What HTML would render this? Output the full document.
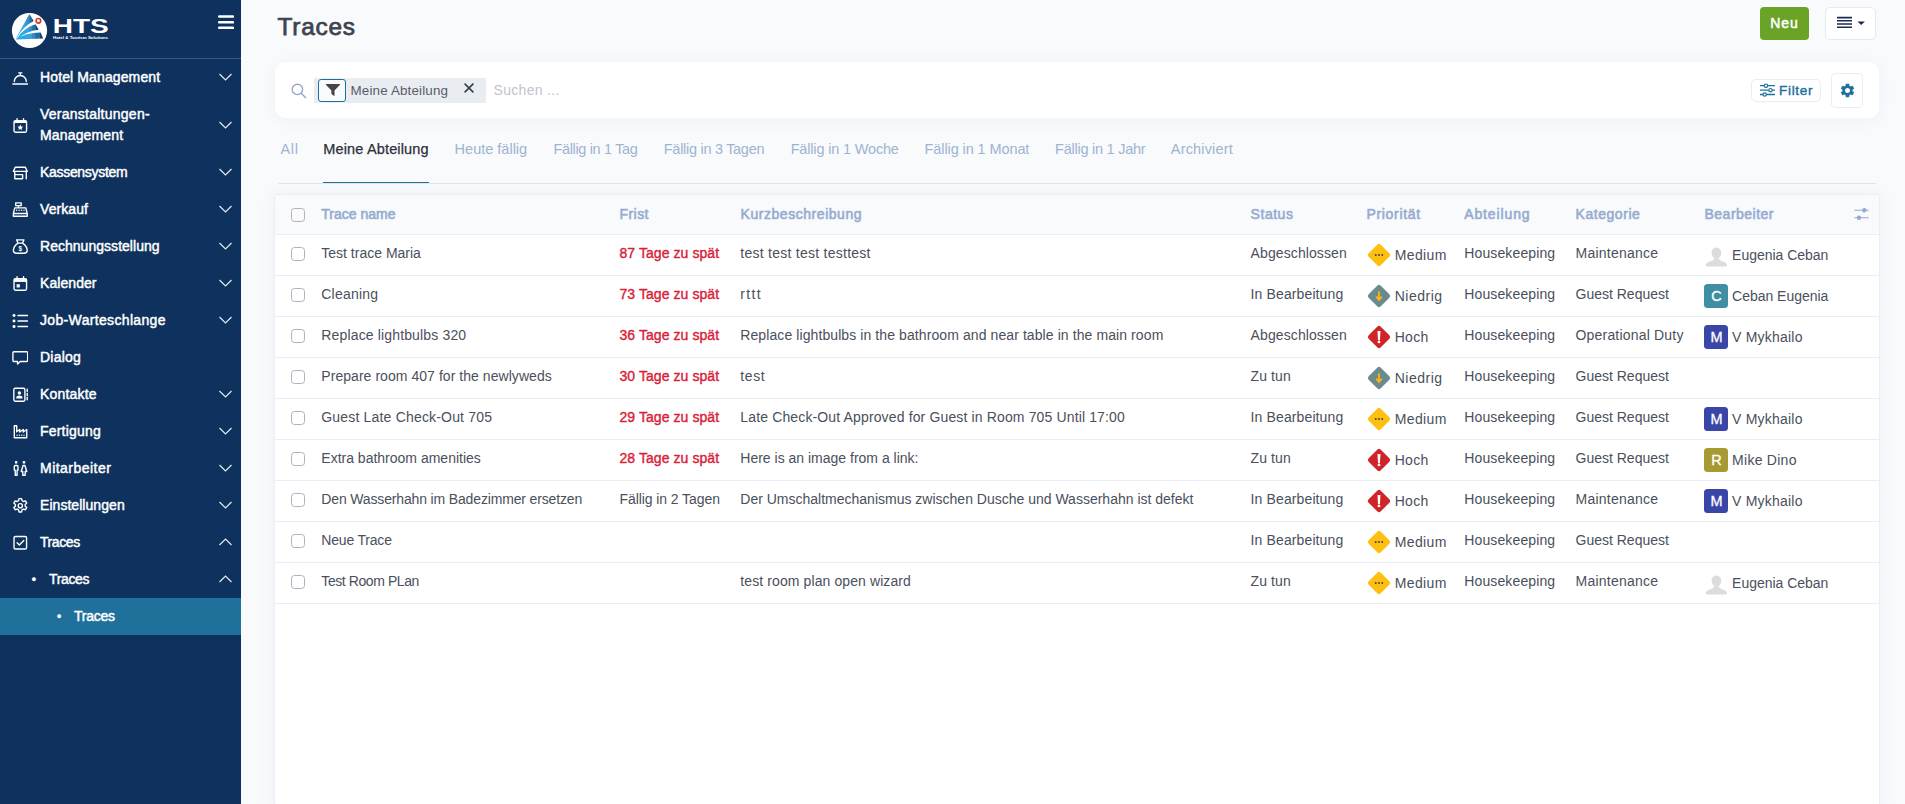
<!DOCTYPE html>
<html><head><meta charset="utf-8">
<style>
*{box-sizing:border-box;margin:0;padding:0}
html,body{width:1905px;height:804px;overflow:hidden;background:#f8fafc;font-family:"Liberation Sans",sans-serif;}
body{position:relative;color:#454b57}
#sb{position:absolute;left:0;top:0;width:241px;height:804px;background:#0e325d;}
.mi .dot{position:absolute;top:1.3px;line-height:37px;font-size:12px}
.pi{position:absolute;left:1090.9px;top:7px;width:26px;height:26px}
.av{position:absolute;left:1429px;top:8px;width:24px;height:24px;border-radius:3.5px;color:#fff;font-size:14.5px;line-height:24px;text-align:center;padding-left:1px;-webkit-text-stroke:0.3px #fff}
#sb .sep{position:absolute;left:0;top:58px;width:241px;height:1px;background:#3a5a82}
.mi{position:absolute;left:0;width:241px;height:37px;color:#fff;font-size:14px;-webkit-text-stroke:0.45px #fff}
.mi .t{position:absolute;left:40px;top:0;line-height:37px;white-space:nowrap}
.mi svg.ic{position:absolute;left:11.8px;top:9.5px;width:16.6px;height:16.6px;}
.mi svg.ch{position:absolute;left:218px;top:13px;width:15px;height:10px}
.mi.act{background:#20709c}
#title{position:absolute;left:277.6px;top:10.5px;font-size:24.4px;line-height:32px;color:#3d424d;-webkit-text-stroke:0.75px #3d424d}
#neu{position:absolute;left:1760px;top:7px;width:49px;height:33px;background:#6aa325;border-radius:4px;color:#fff;font-size:14px;line-height:32px;-webkit-text-stroke:0.5px #fff}
#neu span{position:absolute;left:10.2px;top:0}
#lst{position:absolute;left:1825px;top:7px;width:51px;height:33px;background:#fff;border:1px solid #e4e9f2;border-radius:5px}
#search{position:absolute;left:275px;top:62px;width:1604px;height:56px;background:#fff;border-radius:10px;box-shadow:0 2px 14px rgba(120,135,180,.08)}
#chip{position:absolute;left:39px;top:16px;width:172px;height:25px;background:#e9ecf0;}
#chip .fb{position:absolute;left:4px;top:1px;width:28px;height:23px;border:1px solid #20709c;border-radius:3px;background:#f8fafc}
#chip .tx{position:absolute;left:36.5px;top:0;line-height:25px;font-size:13.4px;color:#585d69}
#such{position:absolute;left:218.5px;top:16px;line-height:25px;font-size:14px;color:#bfc3cc}
#fbtn{position:absolute;left:1476px;top:17px;width:70px;height:23px;border:1px solid #e8edf6;border-radius:5px;background:#fff;color:#20709c;font-size:13.5px;line-height:21px;-webkit-text-stroke:0.4px #20709c}
#gear{position:absolute;left:1556px;top:11px;width:32px;height:35px;border:1px solid #e8edf6;border-radius:4px;background:#fff}
#tabs{position:absolute;left:278px;top:118px;width:1598px;height:66px;border-bottom:1px solid #e1e5ef}
#tabs span{position:absolute;top:21px;line-height:20px;font-size:14.5px;color:#9fb3d1;white-space:nowrap}
#tabs span.a{color:#2a2f3a;-webkit-text-stroke:0.25px #2a2f3a}
#tabs .ul{position:absolute;left:45px;top:64px;width:106px;height:1px;background:#20709c}
#tbl{position:absolute;left:274px;top:194px;width:1606px;height:620px;background:#fff;border:1px solid #e9eef7;border-radius:3px;box-shadow:0 0 16px rgba(120,135,180,.09)}
.hd{position:absolute;left:0;top:0;width:1604px;height:40px;background:#f8fafc;border-bottom:1px solid #e9edf5}
.hd span{position:absolute;top:0;line-height:39px;font-size:14px;color:#96acd0;-webkit-text-stroke:0.6px #96acd0;white-space:nowrap}
.r{position:absolute;left:0;width:1604px;height:41px;border-bottom:1px solid #e9edf5}
.r span{position:absolute;top:0;line-height:36px;font-size:14px;color:#4a505c;white-space:nowrap}
.cb{position:absolute;left:16px;width:14px;height:14px;border:1px solid #b7adbf;border-radius:3.5px;background:#fff}
.hd .cb{background:transparent}
</style></head><body>
<div id="sb"><div class="sep"></div><svg id="logo" style="position:absolute;left:10px;top:11px" width="102" height="40" viewBox="0 0 102 40">
<defs>
<linearGradient id="g1" gradientUnits="userSpaceOnUse" x1="0" x2="40" y1="0" y2="0"><stop offset=".4" stop-color="#2ea6e2"/><stop offset=".42" stop-color="#3b86cc"/><stop offset=".485" stop-color="#3b86cc"/><stop offset=".495" stop-color="#1f709c"/><stop offset=".545" stop-color="#1f709c"/><stop offset=".555" stop-color="#1d3d74"/></linearGradient>
<linearGradient id="g2" gradientUnits="userSpaceOnUse" x1="0" x2="40" y1="0" y2="0"><stop offset=".475" stop-color="#2ea6e2"/><stop offset=".49" stop-color="#3b86cc"/><stop offset=".555" stop-color="#3b86cc"/><stop offset=".565" stop-color="#1f709c"/><stop offset=".645" stop-color="#1f709c"/><stop offset=".655" stop-color="#1d3d74"/></linearGradient>
<linearGradient id="g3" gradientUnits="userSpaceOnUse" x1="0" x2="40" y1="0" y2="0"><stop offset=".545" stop-color="#2ea6e2"/><stop offset=".555" stop-color="#3b86cc"/><stop offset=".63" stop-color="#3b86cc"/><stop offset=".64" stop-color="#1f709c"/><stop offset=".745" stop-color="#1f709c"/><stop offset=".755" stop-color="#1d3d74"/></linearGradient>
</defs>
<circle cx="19.5" cy="19.5" r="17.6" fill="#fff"/>
<path d="M6.2 26.9 L19.1 3.6 Q19.6 3.2 20 3.8 L23.6 10 Q13 15.5 7 26.6 Z" fill="url(#g1)"/>
<path d="M7.2 27.2 Q14 16.5 25.6 13.3 L28.7 18.7 Q16 20 7.8 27.8 Z" fill="url(#g2)"/>
<path d="M5.8 28 Q17 21.3 30.6 21.5 L33.2 27.6 L6.2 28.6 Z" fill="url(#g3)"/>
<circle cx="28.4" cy="9.8" r="2.3" fill="#fff" stroke="#d8372a" stroke-width="1.7"/>
<text x="42.7" y="22.2" font-family="Liberation Sans" font-weight="bold" font-size="19.8" fill="#fff" textLength="56" lengthAdjust="spacingAndGlyphs">HTS</text>
<text x="43" y="28.4" font-family="Liberation Sans" font-weight="bold" font-size="4.3" fill="#fff" textLength="55" lengthAdjust="spacingAndGlyphs">Hotel &amp; Tourism Solutions</text>
</svg><svg style="position:absolute;left:218px;top:14px" width="16" height="16" viewBox="0 0 16 16"><path d="M1.2 2.6 h13.8 M1.2 8.3 h13.8 M1.2 13.8 h13.8" stroke="#fff" stroke-width="2.5" stroke-linecap="round"/></svg><div class="mi" style="top:59px"><svg class="ic" style="" viewBox="0 0 18 18"><path d="M2.5 13.5 a6.5 6.5 0 0 1 13 0 M1 16.2 h16 M9 7 v-2.3 M7.3 4.2 h3.4" fill="none" stroke="#fff" stroke-width="1.5" stroke-linejoin="round" stroke-linecap="round"/></svg><span class="t" style="letter-spacing:0.12px">Hotel Management</span><svg class="ch" viewBox="0 0 15 10"><path d="M1.5 2 L7.5 8 L13.5 2" fill="none" stroke="#e4e9f1" stroke-width="1.2"/></svg></div><div class="mi" style="top:96px;height:58px"><svg class="ic" style="top:21px" viewBox="0 0 18 18"><rect x="2.2" y="4" width="13.6" height="12.5" rx="1.5" fill="none" stroke="#fff" stroke-width="1.5" stroke-linejoin="round" stroke-linecap="round"/><path d="M2.2 4.3 h13.6 v2.2 h-13.6z" fill="#fff"/><path d="M5.5 1.8 v3 M12.5 1.8 v3" fill="none" stroke="#fff" stroke-width="1.5" stroke-linejoin="round" stroke-linecap="round"/><path d="M9 8.2 l1 2.1 2.2.2 -1.7 1.5 .5 2.2 -2 -1.2 -2 1.2 .5 -2.2 -1.7 -1.5 2.2 -.2z" fill="#fff"/></svg><span class="t" style="line-height:21px;top:8px;letter-spacing:0.25px">Veranstaltungen-</span><span class="t" style="line-height:21px;top:29px;letter-spacing:0.16px">Management</span><svg style="top:24px" class="ch" viewBox="0 0 15 10"><path d="M1.5 2 L7.5 8 L13.5 2" fill="none" stroke="#e4e9f1" stroke-width="1.2"/></svg></div><div class="mi" style="top:154px"><svg class="ic" style="" viewBox="0 0 18 18"><path d="M1.5 8 l2 -4.5 h11 l2 4.5 z M3 8 v8 M15.5 8 v8 M3 11.5 h8.5 v4.5 h-8.5" fill="none" stroke="#fff" stroke-width="1.5" stroke-linejoin="round" stroke-linecap="round"/></svg><span class="t" style="letter-spacing:-0.31px">Kassensystem</span><svg class="ch" viewBox="0 0 15 10"><path d="M1.5 2 L7.5 8 L13.5 2" fill="none" stroke="#e4e9f1" stroke-width="1.2"/></svg></div><div class="mi" style="top:191px"><svg class="ic" style="" viewBox="0 0 18 18"><rect x="4" y="2" width="6" height="3" fill="none" stroke="#fff" stroke-width="1.5" stroke-linejoin="round" stroke-linecap="round"/><path d="M7 5 v2.5 M3 7.5 h12 l1.5 6 h-15z M1.5 13.5 v3 h15 v-3 M5 10 h.1 M7.7 10 h.1 M10.3 10 h.1 M13 10 h.1" fill="none" stroke="#fff" stroke-width="1.5" stroke-linejoin="round" stroke-linecap="round"/></svg><span class="t" style="letter-spacing:0.08px">Verkauf</span><svg class="ch" viewBox="0 0 15 10"><path d="M1.5 2 L7.5 8 L13.5 2" fill="none" stroke="#e4e9f1" stroke-width="1.2"/></svg></div><div class="mi" style="top:228px"><svg class="ic" style="" viewBox="0 0 18 18"><path d="M6.5 5.5 l-1.5 -3.5 h8 l-1.5 3.5 c3 2 5 5 5 8 c0 2 -1.5 3 -3.5 3 h-8 c-2 0 -3.5 -1 -3.5 -3 c0 -3 2 -6 5 -8z M6.5 5.5 h5" fill="none" stroke="#fff" stroke-width="1.5" stroke-linejoin="round" stroke-linecap="round"/><text x="9" y="14" font-size="7" font-weight="bold" fill="#fff" text-anchor="middle" font-family="Liberation Sans">$</text></svg><span class="t" style="letter-spacing:0.03px">Rechnungsstellung</span><svg class="ch" viewBox="0 0 15 10"><path d="M1.5 2 L7.5 8 L13.5 2" fill="none" stroke="#e4e9f1" stroke-width="1.2"/></svg></div><div class="mi" style="top:265px"><svg class="ic" style="" viewBox="0 0 18 18"><rect x="2.2" y="4" width="13.6" height="12.5" rx="1.5" fill="none" stroke="#fff" stroke-width="1.5" stroke-linejoin="round" stroke-linecap="round"/><path d="M2.2 4.5 h13.6 v3 h-13.6z" fill="#fff"/><path d="M5.5 1.8 v3 M12.5 1.8 v3" fill="none" stroke="#fff" stroke-width="1.5" stroke-linejoin="round" stroke-linecap="round"/><rect x="5" y="10" width="3.5" height="3.5" fill="#fff"/></svg><span class="t" style="letter-spacing:0.07px">Kalender</span><svg class="ch" viewBox="0 0 15 10"><path d="M1.5 2 L7.5 8 L13.5 2" fill="none" stroke="#e4e9f1" stroke-width="1.2"/></svg></div><div class="mi" style="top:302px"><svg class="ic" style="" viewBox="0 0 18 18"><path d="M6.5 3.8 h10.5 M6.5 9.8 h10.5 M6.5 15.8 h10.5" fill="none" stroke="#fff" stroke-width="1.5" stroke-linejoin="round" stroke-linecap="round" stroke-width="1.7"/><circle cx="2.2" cy="3.8" r="1.6" fill="#fff"/><circle cx="2.2" cy="9.8" r="1.6" fill="#fff"/><circle cx="2.2" cy="15.8" r="1.6" fill="#fff"/></svg><span class="t" style="letter-spacing:0.34px">Job-Warteschlange</span><svg class="ch" viewBox="0 0 15 10"><path d="M1.5 2 L7.5 8 L13.5 2" fill="none" stroke="#e4e9f1" stroke-width="1.2"/></svg></div><div class="mi" style="top:339px"><svg class="ic" style="" viewBox="0 0 18 18"><path d="M2 3 h14 a1 1 0 0 1 1 1 v8.5 a1 1 0 0 1 -1 1 h-7 l-3 2.8 v-2.8 h-4 a1 1 0 0 1 -1 -1 v-8.5 a1 1 0 0 1 1 -1z" fill="none" stroke="#fff" stroke-width="1.5" stroke-linejoin="round" stroke-linecap="round"/></svg><span class="t" style="letter-spacing:0.21px">Dialog</span></div><div class="mi" style="top:376px"><svg class="ic" style="" viewBox="0 0 18 18"><rect x="2" y="2.5" width="12" height="14" rx="1.5" fill="none" stroke="#fff" stroke-width="1.5" stroke-linejoin="round" stroke-linecap="round"/><circle cx="8" cy="7.5" r="1.9" fill="#fff"/><path d="M4.5 13.5 c0 -2.5 1.5 -3.2 3.5 -3.2 s3.5 .7 3.5 3.200z" fill="#fff"/><path d="M16.5 3.5 v2.5 M16.5 8 v2.5 M16.5 12.5 v2.5" fill="none" stroke="#fff" stroke-width="1.5" stroke-linejoin="round" stroke-linecap="round"/></svg><span class="t" style="letter-spacing:0.18px">Kontakte</span><svg class="ch" viewBox="0 0 15 10"><path d="M1.5 2 L7.5 8 L13.5 2" fill="none" stroke="#e4e9f1" stroke-width="1.2"/></svg></div><div class="mi" style="top:413px"><svg class="ic" style="" viewBox="0 0 18 18"><path d="M2.5 3 v13 h13.5 v-9 l-3.8 2.8 v-2.8 l-3.8 2.8 v-2.8 l-3.3 2.5 v-6.500z M5.5 13.2 h.1 M8 13.2 h.1 M10.5 13.2 h.1 M13 13.2 h.1" fill="none" stroke="#fff" stroke-width="1.5" stroke-linejoin="round" stroke-linecap="round"/></svg><span class="t" style="letter-spacing:0.20px">Fertigung</span><svg class="ch" viewBox="0 0 15 10"><path d="M1.5 2 L7.5 8 L13.5 2" fill="none" stroke="#e4e9f1" stroke-width="1.2"/></svg></div><div class="mi" style="top:450px"><svg class="ic" style="" viewBox="0 0 18 18"><rect x="3.2" y="1.2" width="2.6" height="2.6" fill="#fff"/><rect x="11.7" y="1.2" width="2.6" height="2.6" fill="#fff"/><path d="M2.5 11 v-4 a1 1 0 0 1 1 -1 h2 a1 1 0 0 1 1 1 v4 h-1 v5.5 h-2 v-5.500z M12 6 h2 l2 6.5 h-1.7 v4 h-2.6 v-4 h-1.700z" fill="none" stroke="#fff" stroke-width="1.5" stroke-linejoin="round" stroke-linecap="round" stroke-width="1.3"/></svg><span class="t" style="letter-spacing:0.47px">Mitarbeiter</span><svg class="ch" viewBox="0 0 15 10"><path d="M1.5 2 L7.5 8 L13.5 2" fill="none" stroke="#e4e9f1" stroke-width="1.2"/></svg></div><div class="mi" style="top:487px"><svg class="ic" style="" viewBox="0 0 18 18"><circle cx="9" cy="9.5" r="2.3" fill="none" stroke="#fff" stroke-width="1.5" stroke-linejoin="round" stroke-linecap="round"/><path d="M7.6 1.8 h2.8 l.5 2.2 1.5 .9 2.2 -.7 1.4 2.4 -1.7 1.5 v1.8 l1.7 1.5 -1.4 2.4 -2.2 -.7 -1.5 .9 -.5 2.2 h-2.8 l-.5 -2.2 -1.5 -.9 -2.2 .7 -1.4 -2.4 1.7 -1.5 v-1.8 l-1.7 -1.5 1.4 -2.4 2.2 .7 1.5 -.9z" fill="none" stroke="#fff" stroke-width="1.5" stroke-linejoin="round" stroke-linecap="round"/></svg><span class="t" style="letter-spacing:0.05px">Einstellungen</span><svg class="ch" viewBox="0 0 15 10"><path d="M1.5 2 L7.5 8 L13.5 2" fill="none" stroke="#e4e9f1" stroke-width="1.2"/></svg></div><div class="mi" style="top:524px"><svg class="ic" style="" viewBox="0 0 18 18"><rect x="2.2" y="2.7" width="13.6" height="13.6" rx="1.5" fill="none" stroke="#fff" stroke-width="1.5" stroke-linejoin="round" stroke-linecap="round"/><path d="M5.5 9.5 l2.5 2.5 4.8 -5" fill="none" stroke="#fff" stroke-width="1.5" stroke-linejoin="round" stroke-linecap="round"/></svg><span class="t" style="letter-spacing:-0.42px">Traces</span><svg class="ch" viewBox="0 0 15 10"><path d="M1.5 8 L7.5 2 L13.5 8" fill="none" stroke="#e4e9f1" stroke-width="1.2"/></svg></div><div class="mi" style="top:561px"><span class="dot" style="left:31.7px">•</span><span class="t" style="left:49px;letter-spacing:-0.36px">Traces</span><svg class="ch" viewBox="0 0 15 10"><path d="M1.5 8 L7.5 2 L13.5 8" fill="none" stroke="#e4e9f1" stroke-width="1.2"/></svg></div><div class="mi act" style="top:598px"><span class="dot" style="left:56.900px">•</span><span class="t" style="left:74px;letter-spacing:-0.24px">Traces</span></div></div>
<div id="title" style="letter-spacing:0.75px">Traces</div><div id="neu"><span style="letter-spacing:0.99px">Neu</span></div><div id="lst"><svg style="position:absolute;left:11.4px;top:8.2px" width="30" height="14" viewBox="0 0 30 14"><path d="M0 1.6 h15 M0 4.8 h15 M0 8 h15 M0 11.2 h15" stroke="#1b2a52" stroke-width="1.6"/><path d="M20.5 5.4 h7.4 l-3.7 3.700z" fill="#1b2a52"/></svg></div>
<div id="search"><svg style="position:absolute;left:16px;top:21px" width="16" height="16" viewBox="0 0 16 16"><circle cx="6.4" cy="6.4" r="5.2" fill="none" stroke="#98a8c8" stroke-width="1.4"/><path d="M10.2 10.2 L15 15" stroke="#98a8c8" stroke-width="1.5"/></svg><div id="chip"><div class="fb"><svg style="position:absolute;left:5.500px;top:4.200px" width="15" height="12.5" viewBox="0 0 15 12.5"><path d="M0.3 0 h14.4 q.5.3 .1.9 l-5.3 5.6 v5 q0 .8 -.7.3 l-2.4 -1.9 v-3.4 l-5.3 -5.6 q-.4-.6 .100-.9z" fill="#4a4048"/></svg></div><div class="tx" style="letter-spacing:0.16px">Meine Abteilung</div><svg style="position:absolute;left:150px;top:4.500px" width="10" height="10" viewBox="0 0 10 10"><path d="M0.6 0.6 L9.4 9.4 M9.4 0.6 L0.6 9.4" stroke="#3a3f4a" stroke-width="1.6"/></svg></div><div id="such" style="letter-spacing:0.32px">Suchen ...</div><div id="fbtn"><svg style="position:absolute;left:7.500px;top:3px" width="15" height="15" viewBox="0 0 15 15"><path d="M0 2.7 h15 M0 7.2 h15 M0 11.5 h15" stroke="#20709c" stroke-width="1.3"/><circle cx="6" cy="2.7" r="1.7" fill="#fff" stroke="#20709c" stroke-width="1.2"/><circle cx="10.5" cy="7.2" r="1.7" fill="#fff" stroke="#20709c" stroke-width="1.2"/><circle cx="4.7" cy="11.5" r="1.7" fill="#fff" stroke="#20709c" stroke-width="1.2"/></svg><span style="position:absolute;left:27px;top:0;letter-spacing:0.70px">Filter</span></div><div id="gear"><svg style="position:absolute;left:6.500px;top:8px" width="17" height="17" viewBox="0 0 24 24"><path d="M19.14 12.94c.04-.3.06-.61.06-.94 0-.32-.02-.64-.07-.94l2.030-1.580c.18-.14.23-.41.12-.61l-1.920-3.320c-.12-.22-.37-.29-.59-.22l-2.390.96c-.5-.38-1.030-.7-1.620-.94l-.36-2.540c-.04-.24-.24-.41-.48-.41h-3.840c-.24 0-.43.17-.47.41l-.36 2.540c-.59.24-1.130.57-1.620.94l-2.390-.96c-.22-.08-.47 0-.59.22L2.740 8.870c-.12.21-.08.47.12.61l2.030 1.580c-.05.3-.09.63-.09.94s.02.64.07.94l-2.030 1.580c-.18.14-.23.41-.12.61l1.920 3.320c.12.22.37.29.59.22l2.390-.96c.5.38 1.030.7 1.620.94l.36 2.540c.05.24.24.41.48.41h3.840c.24 0 .44-.17.47-.41l.36-2.540c.59-.24 1.130-.56 1.620-.94l2.390.96c.22.08.47 0 .59-.22l1.920-3.320c.12-.22.07-.47-.12-.61l-2.010-1.580zM12 15.600c-1.980 0-3.6-1.620-3.6-3.600s1.620-3.6 3.6-3.6 3.6 1.620 3.6 3.6-1.620 3.6-3.6 3.600z" fill="#20709c"/></svg></div></div>
<div id="tabs"><span class="" style="left:2.4px;letter-spacing:0.69px">All</span><span class="a" style="left:45.3px;letter-spacing:0.15px">Meine Abteilung</span><span class="" style="left:176.6px;letter-spacing:-0.00px">Heute fällig</span><span class="" style="left:275.4px;letter-spacing:-0.34px">Fällig in 1 Tag</span><span class="" style="left:385.8px;letter-spacing:-0.29px">Fällig in 3 Tagen</span><span class="" style="left:512.7px;letter-spacing:-0.17px">Fällig in 1 Woche</span><span class="" style="left:646.6px;letter-spacing:-0.10px">Fällig in 1 Monat</span><span class="" style="left:777.1px;letter-spacing:-0.25px">Fällig in 1 Jahr</span><span class="" style="left:892.8px;letter-spacing:0.17px">Archiviert</span><div class="ul"></div></div>
<div id="tbl"><div class="hd"><div class="cb" style="top:13px"></div><span style="left:46.3px;letter-spacing:0.01px">Trace name</span><span style="left:344.5px;letter-spacing:0.44px">Frist</span><span style="left:465.6px;letter-spacing:0.54px">Kurzbeschreibung</span><span style="left:975.6px;letter-spacing:0.53px">Status</span><span style="left:1091.4px;letter-spacing:0.69px">Priorität</span><span style="left:1189.2px;letter-spacing:0.88px">Abteilung</span><span style="left:1300.5px;letter-spacing:0.55px">Kategorie</span><span style="left:1429.5px;letter-spacing:0.49px">Bearbeiter</span><svg style="position:absolute;left:1579px;top:11px" width="16" height="16" viewBox="0 0 16 16"><path d="M0.3 4.2 h14.5 M0.3 11.7 h14.5" stroke="#96acd0" stroke-width="1.1"/><circle cx="10.3" cy="4.2" r="2.2" fill="#96acd0"/><circle cx="5" cy="11.7" r="2.2" fill="#96acd0"/></svg></div><div class="r" style="top:40px"><div class="cb" style="top:12px"></div><span style="left:46.3px;letter-spacing:-0.00px">Test trace Maria</span><span style="left:344.5px;letter-spacing:0.07px;color:#d81e3a;-webkit-text-stroke:0.4px #d81e3a">87 Tage zu spät</span><span style="left:465.3px;letter-spacing:0.26px">test test test testtest</span><span style="left:975.6px;letter-spacing:0.10px">Abgeschlossen</span><svg class="pi" viewBox="0 0 24 24"><rect x="4.1" y="4.1" width="15.8" height="15.8" rx="2.3" transform="rotate(45 12 12)" fill="#fdc010"/><circle cx="9" cy="12" r=".95" fill="#4a4048"/><circle cx="12" cy="12" r=".95" fill="#4a4048"/><circle cx="15" cy="12" r=".95" fill="#4a4048"/></svg><span style="left:1119.7px;letter-spacing:0.37px;top:2px">Medium</span><span style="left:1189.3px;letter-spacing:0.12px">Housekeeping</span><span style="left:1300.5px;letter-spacing:0.23px">Maintenance</span><svg class="av" viewBox="0 0 24 24"><ellipse cx="11.9" cy="10" rx="5.1" ry="5.9" fill="#dadcde"/><path d="M0.8 22.5 c0 -2 2 -3 5 -4 c2.5 -.8 3.4 -1.5 3.4 -3.2 h5.4 c0 1.7 1 2.4 3.4 3.2 c3 1 5 2 5 4 q0 1.5 -1.5 1.5 h-19.2 q-1.5 0 -1.5 -1.500z" fill="#dadcde"/></svg><span style="left:1457.1px;letter-spacing:-0.02px;top:2px">Eugenia Ceban</span></div><div class="r" style="top:81px"><div class="cb" style="top:12px"></div><span style="left:46.3px;letter-spacing:0.21px">Cleaning</span><span style="left:344.5px;letter-spacing:0.07px;color:#d81e3a;-webkit-text-stroke:0.4px #d81e3a">73 Tage zu spät</span><span style="left:465.3px;letter-spacing:1.37px">rttt</span><span style="left:975.6px;letter-spacing:0.12px">In Bearbeitung</span><svg class="pi" viewBox="0 0 24 24"><rect x="4.1" y="4.1" width="15.8" height="15.8" rx="2.3" transform="rotate(45 12 12)" fill="#6b8a8e"/><path d="M12 7.6 v7.6 M9.4 12.6 l2.6 2.9 2.6 -2.9" stroke="#fdb515" stroke-width="1.7" fill="none"/></svg><span style="left:1119.7px;letter-spacing:0.50px;top:2px">Niedrig</span><span style="left:1189.3px;letter-spacing:0.12px">Housekeeping</span><span style="left:1300.5px;letter-spacing:-0.00px">Guest Request</span><div class="av" style="background:#3f8ea3">C</div><span style="left:1457.1px;letter-spacing:-0.02px;top:2px">Ceban Eugenia</span></div><div class="r" style="top:122px"><div class="cb" style="top:12px"></div><span style="left:46.3px;letter-spacing:0.15px">Replace lightbulbs 320</span><span style="left:344.5px;letter-spacing:0.07px;color:#d81e3a;-webkit-text-stroke:0.4px #d81e3a">36 Tage zu spät</span><span style="left:465.3px;letter-spacing:0.09px">Replace lightbulbs in the bathroom and near table in the main room</span><span style="left:975.6px;letter-spacing:0.10px">Abgeschlossen</span><svg class="pi" viewBox="0 0 24 24"><rect x="4.1" y="4.1" width="15.8" height="15.8" rx="2.3" transform="rotate(45 12 12)" fill="#cf2529"/><path d="M10.6 6.4 h2.8 l-.5 8.4 h-1.800z" fill="#fff"/><circle cx="12" cy="16.5" r="1.3" fill="#fff"/></svg><span style="left:1119.7px;letter-spacing:0.29px;top:2px">Hoch</span><span style="left:1189.3px;letter-spacing:0.12px">Housekeeping</span><span style="left:1300.5px;letter-spacing:0.19px">Operational Duty</span><div class="av" style="background:#3a45a8">M</div><span style="left:1457.1px;letter-spacing:0.21px;top:2px">V Mykhailo</span></div><div class="r" style="top:163px"><div class="cb" style="top:12px"></div><span style="left:46.3px;letter-spacing:0.05px">Prepare room 407 for the newlyweds</span><span style="left:344.5px;letter-spacing:0.07px;color:#d81e3a;-webkit-text-stroke:0.4px #d81e3a">30 Tage zu spät</span><span style="left:465.3px;letter-spacing:0.59px">test</span><span style="left:975.6px;letter-spacing:0.09px">Zu tun</span><svg class="pi" viewBox="0 0 24 24"><rect x="4.1" y="4.1" width="15.8" height="15.8" rx="2.3" transform="rotate(45 12 12)" fill="#6b8a8e"/><path d="M12 7.6 v7.6 M9.4 12.6 l2.6 2.9 2.6 -2.9" stroke="#fdb515" stroke-width="1.7" fill="none"/></svg><span style="left:1119.7px;letter-spacing:0.50px;top:2px">Niedrig</span><span style="left:1189.3px;letter-spacing:0.12px">Housekeeping</span><span style="left:1300.5px;letter-spacing:-0.00px">Guest Request</span></div><div class="r" style="top:204px"><div class="cb" style="top:12px"></div><span style="left:46.3px;letter-spacing:0.18px">Guest Late Check-Out 705</span><span style="left:344.5px;letter-spacing:0.07px;color:#d81e3a;-webkit-text-stroke:0.4px #d81e3a">29 Tage zu spät</span><span style="left:465.3px;letter-spacing:0.14px">Late Check-Out Approved for Guest in Room 705 Until 17:00</span><span style="left:975.6px;letter-spacing:0.12px">In Bearbeitung</span><svg class="pi" viewBox="0 0 24 24"><rect x="4.1" y="4.1" width="15.8" height="15.8" rx="2.3" transform="rotate(45 12 12)" fill="#fdc010"/><circle cx="9" cy="12" r=".95" fill="#4a4048"/><circle cx="12" cy="12" r=".95" fill="#4a4048"/><circle cx="15" cy="12" r=".95" fill="#4a4048"/></svg><span style="left:1119.7px;letter-spacing:0.37px;top:2px">Medium</span><span style="left:1189.3px;letter-spacing:0.12px">Housekeeping</span><span style="left:1300.5px;letter-spacing:-0.00px">Guest Request</span><div class="av" style="background:#3a45a8">M</div><span style="left:1457.1px;letter-spacing:0.21px;top:2px">V Mykhailo</span></div><div class="r" style="top:245px"><div class="cb" style="top:12px"></div><span style="left:46.3px;letter-spacing:-0.00px">Extra bathroom amenities</span><span style="left:344.5px;letter-spacing:0.07px;color:#d81e3a;-webkit-text-stroke:0.4px #d81e3a">28 Tage zu spät</span><span style="left:465.3px;letter-spacing:-0.00px">Here is an image from a link:</span><span style="left:975.6px;letter-spacing:0.09px">Zu tun</span><svg class="pi" viewBox="0 0 24 24"><rect x="4.1" y="4.1" width="15.8" height="15.8" rx="2.3" transform="rotate(45 12 12)" fill="#cf2529"/><path d="M10.6 6.4 h2.8 l-.5 8.4 h-1.800z" fill="#fff"/><circle cx="12" cy="16.5" r="1.3" fill="#fff"/></svg><span style="left:1119.7px;letter-spacing:0.29px;top:2px">Hoch</span><span style="left:1189.3px;letter-spacing:0.12px">Housekeeping</span><span style="left:1300.5px;letter-spacing:-0.00px">Guest Request</span><div class="av" style="background:#a89a32">R</div><span style="left:1457.1px;letter-spacing:0.26px;top:2px">Mike Dino</span></div><div class="r" style="top:286px"><div class="cb" style="top:12px"></div><span style="left:46.3px;letter-spacing:-0.15px">Den Wasserhahn im Badezimmer ersetzen</span><span style="left:344.5px;letter-spacing:-0.08px">Fällig in 2 Tagen</span><span style="left:465.3px;letter-spacing:0.00px">Der Umschaltmechanismus zwischen Dusche und Wasserhahn ist defekt</span><span style="left:975.6px;letter-spacing:0.12px">In Bearbeitung</span><svg class="pi" viewBox="0 0 24 24"><rect x="4.1" y="4.1" width="15.8" height="15.8" rx="2.3" transform="rotate(45 12 12)" fill="#cf2529"/><path d="M10.6 6.4 h2.8 l-.5 8.4 h-1.800z" fill="#fff"/><circle cx="12" cy="16.5" r="1.3" fill="#fff"/></svg><span style="left:1119.7px;letter-spacing:0.29px;top:2px">Hoch</span><span style="left:1189.3px;letter-spacing:0.12px">Housekeeping</span><span style="left:1300.5px;letter-spacing:0.23px">Maintenance</span><div class="av" style="background:#3a45a8">M</div><span style="left:1457.1px;letter-spacing:0.21px;top:2px">V Mykhailo</span></div><div class="r" style="top:327px"><div class="cb" style="top:12px"></div><span style="left:46.3px;letter-spacing:-0.19px">Neue Trace</span><span style="left:975.6px;letter-spacing:0.12px">In Bearbeitung</span><svg class="pi" viewBox="0 0 24 24"><rect x="4.1" y="4.1" width="15.8" height="15.8" rx="2.3" transform="rotate(45 12 12)" fill="#fdc010"/><circle cx="9" cy="12" r=".95" fill="#4a4048"/><circle cx="12" cy="12" r=".95" fill="#4a4048"/><circle cx="15" cy="12" r=".95" fill="#4a4048"/></svg><span style="left:1119.7px;letter-spacing:0.37px;top:2px">Medium</span><span style="left:1189.3px;letter-spacing:0.12px">Housekeeping</span><span style="left:1300.5px;letter-spacing:-0.00px">Guest Request</span></div><div class="r" style="top:368px"><div class="cb" style="top:12px"></div><span style="left:46.3px;letter-spacing:-0.42px">Test Room PLan</span><span style="left:465.3px;letter-spacing:0.10px">test room plan open wizard</span><span style="left:975.6px;letter-spacing:0.09px">Zu tun</span><svg class="pi" viewBox="0 0 24 24"><rect x="4.1" y="4.1" width="15.8" height="15.8" rx="2.3" transform="rotate(45 12 12)" fill="#fdc010"/><circle cx="9" cy="12" r=".95" fill="#4a4048"/><circle cx="12" cy="12" r=".95" fill="#4a4048"/><circle cx="15" cy="12" r=".95" fill="#4a4048"/></svg><span style="left:1119.7px;letter-spacing:0.37px;top:2px">Medium</span><span style="left:1189.3px;letter-spacing:0.12px">Housekeeping</span><span style="left:1300.5px;letter-spacing:0.23px">Maintenance</span><svg class="av" viewBox="0 0 24 24"><ellipse cx="11.9" cy="10" rx="5.1" ry="5.9" fill="#dadcde"/><path d="M0.8 22.5 c0 -2 2 -3 5 -4 c2.5 -.8 3.4 -1.5 3.4 -3.2 h5.4 c0 1.7 1 2.4 3.4 3.2 c3 1 5 2 5 4 q0 1.5 -1.5 1.5 h-19.2 q-1.5 0 -1.5 -1.500z" fill="#dadcde"/></svg><span style="left:1457.1px;letter-spacing:-0.02px;top:2px">Eugenia Ceban</span></div></div>
</body></html>
